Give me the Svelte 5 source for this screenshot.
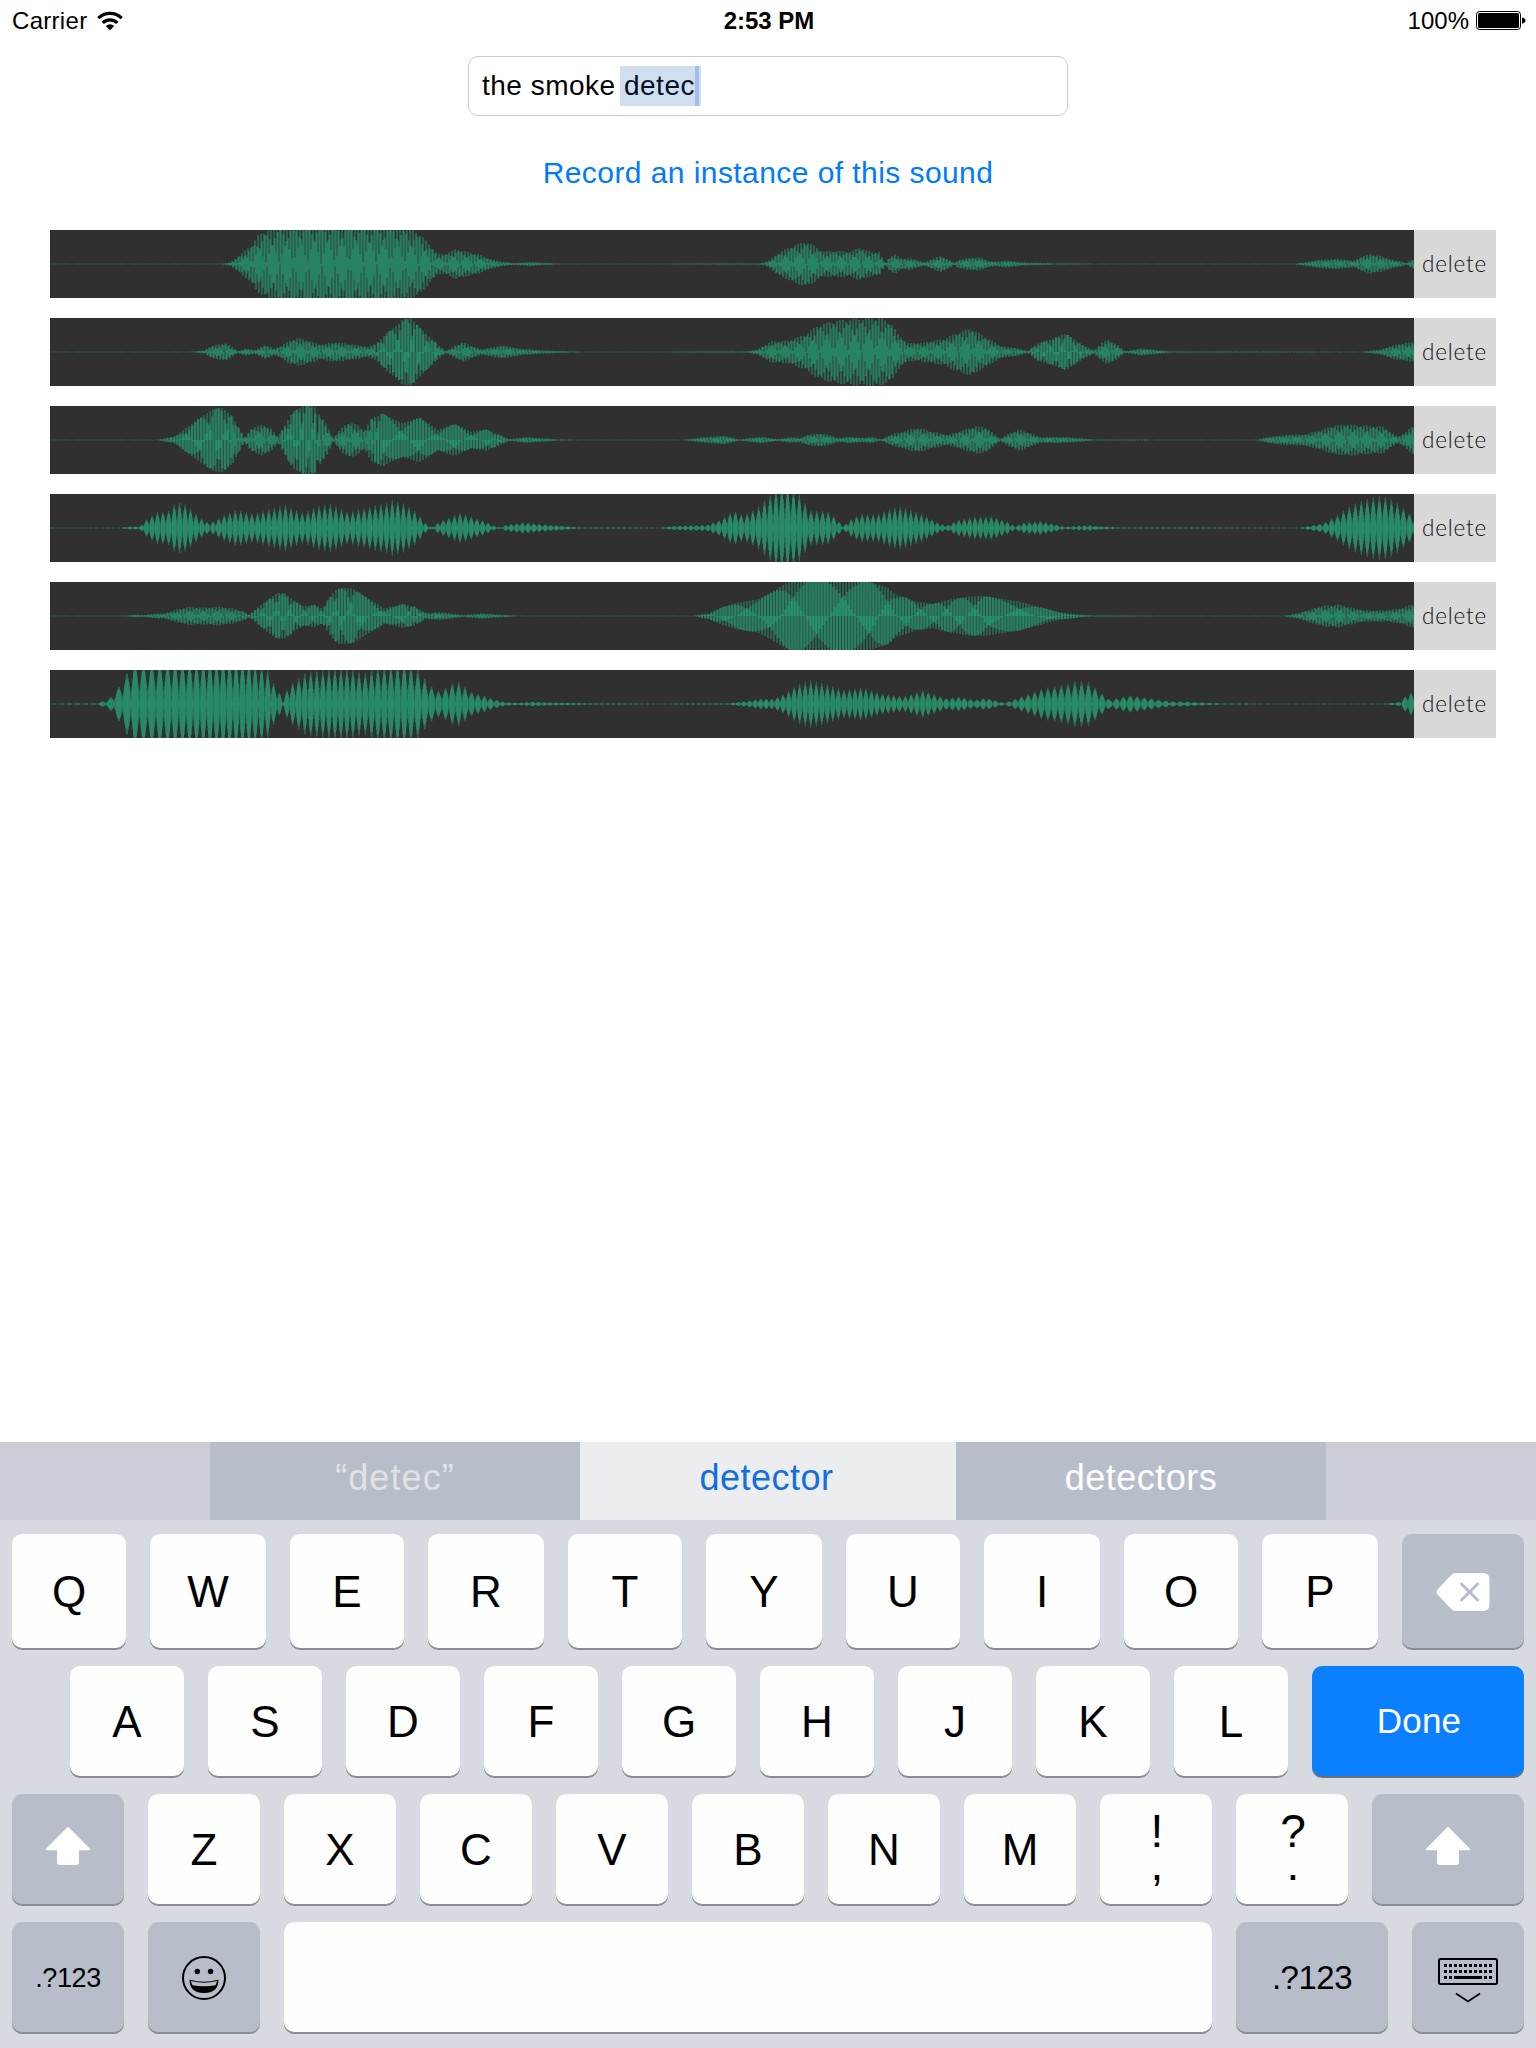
<script>
  const WIDTH = 1364;
  const HALF = 34;

  // Each envelope is a list of stretches: a start offset in px, then
  // [position, height] pairs counted in thirds of a pixel.
  const recordings = [
    {
      beats: [[0, 0], [1364, 410]],
      env: [
        [-10, [[30,1],[540,1],[570,6],[600,30],[630,55],[650,85],[680,105],[720,120],[800,135],[1060,125],[1110,105],[1130,98],[1165,60],[1190,30],[1210,30],[1245,45],[1310,30],[1340,18],[1380,7],[1420,3],[1470,6],[1520,3],[1560,1]]],
        [610, [[0,1],[300,2],[320,8],[350,32],[380,48],[400,58],[435,68],[460,55],[485,38],[520,40],[570,38],[595,50],[630,36],[655,36],[670,8],[675,4],[680,15],[700,30],[725,15],[745,18],[790,5],[810,14],[840,24],[870,10],[880,2],[890,12],[920,18],[960,20],[980,10],[1005,7],[1035,11],[1080,5],[1180,2],[1300,1]]],
        [1110, [[100,1],[400,1],[430,5],[470,12],[530,16],[560,12],[580,10],[600,22],[628,30],[660,24],[690,14],[720,8],[737,2],[745,8],[762,18]]]
      ]
    },
    {
      beats: [[0,0],[325,66],[338,67],[355,68],[367,69],[385,70],[780,180],[980,220],[1030,224],[1364,300]],
      env: [
        [-10, [[30,1],[450,1],[490,5],[510,18],[555,27],[590,3],[615,11],[640,5],[672,22],[700,10],[720,18],[745,35],[770,42],[800,36],[840,22],[880,30],[930,24],[980,15],[1010,28],[1040,60],[1070,80],[1085,98],[1110,100],[1135,75],[1160,50],[1190,22],[1215,3],[1240,18],[1265,30],[1320,8],[1385,20],[1440,10],[1500,5],[1560,3],[1620,1]]],
        [610, [[0,1],[260,2],[290,8],[330,32],[380,34],[430,52],[470,80],[520,95],[590,102],[650,105],[690,90],[710,55],[740,27],[780,28],[850,40],[890,60],[930,72],[970,48],[1020,18],[1070,12],[1100,3],[1130,25],[1170,38],[1215,55],[1250,30],[1300,5],[1320,25],[1340,38],[1370,22],[1390,3],[1410,5],[1440,11],[1490,6]]],
        [1110, [[0,5],[30,1.5],[600,1],[630,4],[660,8],[700,22],[730,27],[762,30]]]
      ]
    },
    {
      beats: [[0,-30],[120,-1],[148,0],[167,1],[182,2],[230,9],[245,10],[257,11],[267,12],[320,22],[332,23],[367,24],[403,25],[437,26],[460,28],[1364,260]],
      env: [
        [-10, [[30,1],[350,1],[400,10],[430,32],[475,65],[520,95],[545,95],[575,70],[595,38],[610,6],[630,35],[665,48],[690,34],[710,10],[730,40],[755,85],[780,98],[800,110],[820,100],[850,60],[870,20],[876,4],[900,35],[925,55],[950,45],[970,28],[990,62],[1025,80],[1050,65],[1085,50],[1135,67],[1160,52],[1190,30],[1240,48],[1290,25],[1335,32],[1370,18],[1405,2],[1450,9],[1500,6],[1550,2],[1600,1]]],
        [610, [[70,1],[90,3],[130,9],[190,13],[235,2],[300,10],[350,3],[385,8],[420,7],[440,16],[480,20],[510,14],[530,6],[570,10],[600,7],[635,9],[660,2],[690,16],[740,30],[770,37],[820,24],[860,15],[900,28],[945,42],[975,38],[1000,18],[1018,3],[1040,18],[1075,32],[1110,20],[1140,8],[1200,10],[1250,6],[1300,1.5]]],
        [1110, [[0,1],[290,1],[320,9],[370,15],[430,17],[480,30],[520,44],[560,48],[620,43],[670,40],[690,22],[712,10],[735,24],[762,50]]]
      ]
    },
    {
      lobes: [[0,5.5],[500,5.7],[640,5.5],[740,5.9],[860,5.3],[1200,5.8],[1364,6.1]],
      env: [
        [-10, [[30,1],[240,1],[260,4],[300,5],[310,20],[330,35],[350,48],[385,52],[407,78],[430,76],[450,60],[475,35],[505,16],[520,20],[555,42],[590,55],[640,42],[680,55],[735,70],[790,45],[830,65],[870,73],[925,48],[990,65],[1030,75],[1060,86],[1090,75],[1130,48],[1160,10],[1175,3],[1200,20],[1260,46],[1300,32],[1340,18],[1365,5],[1380,2],[1400,10],[1450,17],[1520,10],[1560,7],[1620,2]]],
        [610, [[0,1],[40,6],[140,9],[180,25],[220,52],[250,38],[290,60],[330,100],[350,125],[380,130],[415,105],[450,52],[500,52],[530,28],[548,5],[570,25],[600,42],[650,40],[680,55],[720,65],[760,52],[800,35],[840,12],[865,8],[890,24],[950,34],[1000,34],[1040,20],[1065,5],[1090,16],[1140,21],[1180,13],[1210,4],[1290,8],[1340,4],[1380,1.5]]],
        [1110, [[0,1.5],[420,1],[450,7],[490,14],[530,38],[560,60],[590,78],[630,92],[665,98],[700,84],[730,60],[762,32]]]
      ]
    },
    {
      beats: [[0,-50],[190,-1],[203,0],[218,1],[232,2],[245,3],[262,4],[278,5],[290,6],[308,7],[352,8],[385,11],[640,70],[673,71],[718,72],[765,73],[818,74],[855,75],[883,76],[908,77],[937,78],[1000,79],[1060,80.5],[1364,145]],
      env: [
        [-10, [[30,1],[250,1],[280,4],[310,3],[340,7],[370,8],[410,20],[440,27],[490,26],[540,29],[580,22],[610,12],[625,4],[650,25],[680,48],[710,70],[735,66],[760,45],[790,28],[820,34],[845,22],[865,55],[890,84],[935,82],[970,60],[1000,42],[1030,22],[1085,36],[1120,28],[1155,8],[1200,12],[1240,6],[1270,3],[1320,8],[1380,4],[1430,1]]],
        [610, [[0,1],[100,1],[140,8],[180,25],[230,40],[290,50],[330,70],[370,95],[400,108],[460,112],[550,112],[600,106],[640,98],[680,85],[705,62],[735,55],[765,42],[790,40],[815,36],[860,48],[920,58],[965,60],[1020,52],[1080,42],[1140,26],[1190,12],[1240,6],[1280,2]]],
        [1110, [[0,1],[370,1],[410,8],[440,18],[480,30],[530,35],[570,26],[610,17],[680,17],[720,24],[762,38]]]
      ]
    },
    {
      lobes: [[0,7.8],[90,8.5],[150,6.7],[240,6.1],[300,6],[370,7],[480,5.8],[820,5.5],[1000,6.7],[1160,7.4],[1364,6.5]],
      env: [
        [-10, [[30,1],[170,2],[185,8],[205,14],[220,30],[240,60],[265,102],[280,125],[600,140],[670,115],[690,95],[705,50],[715,46],[727,10],[740,45],[760,68],[800,98],[850,102],[900,110],[940,105],[970,92],[1000,110],[1100,125],[1130,108],[1160,68],[1180,48],[1200,38],[1240,66],[1260,66],[1290,38],[1340,22],[1360,14],[1400,5],[1430,4],[1480,7],[1560,4],[1660,2]]],
        [610, [[0,1],[200,2],[260,9],[300,16],[340,16],[370,28],[410,58],[450,72],[500,60],[550,42],[610,50],[660,32],[730,22],[790,42],[830,26],[860,17],[900,22],[940,12],[980,18],[1035,3],[1060,14],[1100,28],[1150,48],[1210,58],[1250,70],[1290,65],[1320,35],[1350,13],[1410,26],[1470,17],[1490,14]]],
        [1110, [[0,12],[30,8],[80,7],[100,6],[150,3],[200,2],[300,1],[670,1],[700,4],[720,6],[735,24],[750,36],[762,24]]]
      ]
    }
  ];

  function interpolate(points, x) {
    if (x <= points[0][0]) return points[0][1];
    for (let i = 1; i < points.length; i++) {
      const [bx, by] = points[i];
      if (x <= bx) {
        const [ax, ay] = points[i - 1];
        return ay + ((by - ay) * (x - ax)) / (bx - ax);
      }
    }
    return points[points.length - 1][1];
  }

  function bar(x, width, up, down) {
    const rise = Math.min(Math.max(up, 0.15), HALF);
    const fall = Math.min(Math.max(down, 0.15), HALF);
    return `M${x} ${(HALF - rise).toFixed(1)}h${width}V${(HALF + fall).toFixed(1)}h-${width}z`;
  }

  // Slow signals: distinct mirrored lobes over a low, even base.
  function traceLobes(envelope, lobes) {
    let peaks = '';
    let base = '';
    let turn = 0;
    for (let x = 0; x < WIDTH; x += 0.5) {
      const height = interpolate(envelope, x);
      turn += (0.5 * Math.PI) / interpolate(lobes, x);
      const lobe = Math.abs(Math.sin(turn));
      const peak = height * Math.pow(lobe, 1.15);
      const low = Math.min(height * (0.32 + 0.5 * lobe), HALF * 0.95 * (0.45 + lobe));
      peaks += bar(x, 0.5, peak, peak);
      base += bar(x, 0.5, low, low);
    }
    return [peaks, base];
  }

  // Fast signals: three interleaved strands, one path each, so that they look
  // brighter where they cross. A sparse fourth path holds the outer peaks.
  function traceStrands(envelope, beats) {
    const paths = ['', '', '', ''];
    for (let x = 0; x < WIDTH; x++) {
      const height = interpolate(envelope, x);
      const beat = interpolate(beats, x);
      const rate = interpolate(beats, x + 1) - beat;
      if (rate > 0.12) {
        const up = height * Math.pow(Math.abs(Math.cos(x * 2.17)), 0.9);
        const down = height * Math.pow(Math.abs(Math.cos(x * 2.17 + 1)), 0.9);
        paths[x % 3] += bar(x, 2.1, up, down);
      } else {
        const value = height * Math.cos((2 * Math.PI * (beat + x)) / 3);
        paths[x % 3] += bar(x, 2.7, value, -value);
        if (x % 3 === 0) paths[3] += bar(x, 2, height, height);
      }
    }
    return paths;
  }

  const waves = recordings.map(({ env, beats, lobes }) => {
    const envelope = env.flatMap(([start, pts]) => pts.map(([x, h]) => [start + x / 3, h / 3]));
    return lobes ? traceLobes(envelope, lobes) : traceStrands(envelope, beats);
  });

  const top = [...'QWERTYUIOP'];
  const home = [...'ASDFGHJKL'];
  const bottom = [...'ZXCVBNM'];
  const dots = [0, 1, 2, 3, 4, 5, 6, 7, 8, 9];
</script>

{#snippet shift()}
  <svg width="44" height="38" viewBox="0 0 44 38" fill="#fff">
    <path d="M21 .6q1-1.2 2 0L43.6 21.5q1 1.8-.8 1.8H33v12q0 2.7-2.7 2.7H13.7Q11 38 11 35.300v-12H1.200Q-.6 23.300.4 21.500z" />
  </svg>
{/snippet}

<div class="screen">
  <header class="status">
    <div class="carrier">
      <span>Carrier</span>
      <svg width="26" height="20" viewBox="0 0 26 20" fill="none" stroke="#000" stroke-width="3.2">
        <path d="M1.300 7.200a16.600 16.600 0 0 1 23.400 0M5.700 11.900a10.400 10.400 0 0 1 14.600 0" />
        <path d="M13 19.200 8.700 14.900q4.300-3.400 8.600 0z" fill="#000" stroke="none" />
      </svg>
    </div>
    <strong>2:53 PM</strong>
    <div class="power">
      <span>100%</span>
      <svg width="50" height="20" viewBox="0 0 50 20">
        <rect x=".5" y=".5" width="44" height="18" rx="3" fill="none" stroke="#000" />
        <rect x="2" y="2" width="41" height="15" rx="1.500" />
        <path d="M46 6.500q3.500.5 3.500 3t-3.500 3z" />
      </svg>
    </div>
  </header>

  <main>
    <div class="field">the smoke&nbsp;<mark>detec</mark></div>
    <button class="record">Record an instance of this sound</button>
    <ul>
      {#each waves as paths}
        <li>
          <svg class="wave" width="1364" height="68" viewBox="0 0 1364 68">
            {#each paths as d}
              <path class:solid={paths.length === 2} {d} />
            {/each}
          </svg>
          <button class="delete">delete</button>
        </li>
      {/each}
    </ul>
  </main>

  <section class="keyboard">
    <div class="suggestions">
      <span class="edge"></span>
      <span class="typed">“detec”</span>
      <span class="chosen">detector</span>
      <span class="other">detectors</span>
      <span class="edge"></span>
    </div>
    <div class="row first">
      {#each top as letter}<button class="key">{letter}</button>{/each}
      <button class="key dark">
        <svg width="54" height="38" viewBox="0 0 54 38">
          <path d="M20 0H47q6.500 0 6.500 6.500V31.500q0 6.500-6.500 6.500H20q-3 0-5-2.200L1.500 21.500q-2.200-2.500 0-5L15 2.200Q17 0 20 0z" fill="#fff" />
          <path d="m25.500 11 16 16m0-16-16 16" stroke="#b7beca" stroke-width="2.800" stroke-linecap="round" />
        </svg>
      </button>
    </div>
    <div class="row home">
      {#each home as letter}<button class="key">{letter}</button>{/each}
      <button class="key done">Done</button>
    </div>
    <div class="row third">
      <button class="key dark">{@render shift()}</button>
      {#each bottom as letter}<button class="key">{letter}</button>{/each}
      <button class="key pair"><span>!</span><span>,</span></button>
      <button class="key pair"><span>?</span><span>.</span></button>
      <button class="key dark">{@render shift()}</button>
    </div>
    <div class="row last">
      <button class="key dark small">.?123</button>
      <button class="key dark">
        <svg width="44" height="44" viewBox="0 0 44 44">
          <circle cx="22" cy="22" r="21" fill="none" stroke="#000" stroke-width="2" />
          <ellipse cx="15.300" cy="15.500" rx="2.700" ry="2.700" />
          <ellipse cx="28.600" cy="15.500" rx="2.700" ry="2.700" />
          <path d="M7.500 23.500q14.500 4.500 29 0q0 13.500-14.500 13.500t-14.500-13.500z" />
          <path d="M9 25q13 3.600 26 0-.5 2.400-1.500 4.200-11.500 2.200-23 0Q9.300 27 9 25z" fill="#b7beca" />
        </svg>
      </button>
      <button class="key space" aria-label="space"></button>
      <button class="key dark medium">.?123</button>
      <button class="key dark">
        <svg class="hide" width="60" height="45" viewBox="0 0 60 45">
          <rect x="1" y="1" width="58" height="25" rx="1.500" fill="none" stroke="#000" stroke-width="2" />
          {#each dots as i}
            <rect x={6 + i * 5} y="6" width="3" height="3" />
            <rect x={6 + i * 5} y="12" width="3" height="3" />
          {/each}
          <path d="M6 18h3v3H6zM11 18h3v3h-3zM16 18h28v3H16zM46 18h3v3h-3zM51 18h3v3h-3z" />
          <path d="m18 35.500 12 8 12-8" fill="none" stroke="#000" stroke-width="1.800" />
        </svg>
      </button>
    </div>
  </section>
</div>

<style>
  :global(body) {
    margin: 0;
    background: #fff;
  }
  .screen {
    display: flex;
    flex-direction: column;
    width: 1536px;
    height: 2048px;
    overflow: hidden;
    background: #fff;
    color: #000;
    font-family: 'Liberation Sans', Arial, sans-serif;
  }
  button {
    margin: 0;
    padding: 0;
    border: 0;
    background: none;
    color: inherit;
    font: inherit;
  }
  svg {
    display: block;
    flex: none;
  }
  .status {
    display: grid;
    grid-template-columns: 1fr auto 1fr;
    align-items: center;
    box-sizing: border-box;
    height: 41px;
    padding: 0 10px 0 12px;
    font-size: 24px;
    line-height: 40px;
  }
  .carrier,
  .power {
    display: flex;
    align-items: center;
  }
  .carrier {
    gap: 10px;
    letter-spacing: 0.3px;
  }
  .power {
    justify-content: flex-end;
    gap: 7px;
  }
  main {
    flex: 1;
    display: flex;
    flex-direction: column;
    align-items: center;
    padding-top: 15px;
  }
  .field {
    display: flex;
    align-items: center;
    box-sizing: border-box;
    width: 600px;
    height: 60px;
    padding: 0 13px 1px;
    border: 1px solid #ccc;
    border-radius: 10px;
    font-size: 28px;
    letter-spacing: 0.5px;
  }
  mark {
    height: 40px;
    padding-left: 4px;
    margin-left: -4px;
    border-right: 4px solid #a4bdef;
    box-shadow: 2px 0 #d0dff0;
    background: #d0dff0;
    color: #001026;
    line-height: 40px;
  }
  .record {
    margin-top: 39px;
    color: #007aff;
    font-size: 30px;
    line-height: 36px;
    letter-spacing: 0.43px;
  }
  ul {
    display: flex;
    flex-direction: column;
    gap: 20px;
    width: 1446px;
    margin: 39px 0 0;
    padding: 0 0 0 10px;
    list-style: none;
  }
  li {
    display: flex;
    height: 68px;
  }
  .wave {
    background: #303030;
  }
  .wave path {
    fill: #25b57d;
    fill-opacity: 0.38;
  }
  .wave .solid {
    fill-opacity: 0.44;
  }
  .delete {
    width: 82px;
    padding: 0 1px 2px 0;
    background: #d8d8d8;
    color: #111;
    font-family: Lato, sans-serif;
    font-size: 22.5px;
    font-weight: 300;
    letter-spacing: 0.8px;
  }
  .keyboard {
    height: 606px;
    background: #d7dae1;
  }
  .suggestions {
    display: grid;
    grid-template-columns: 210px 370px 376px 370px 210px;
    height: 78px;
    font-size: 36px;
    line-height: 72px;
    letter-spacing: 0.5px;
    text-align: center;
  }
  .edge {
    background: #cacdd6;
  }
  .typed,
  .other {
    background: #b7beca;
    color: #fff;
  }
  .typed {
    color: #e1e2e4;
    letter-spacing: 1.1px;
  }
  .chosen {
    padding-right: 3px;
    background: #ebedee;
    color: #126fe0;
  }
  .row {
    display: grid;
    column-gap: 24px;
    height: 110px;
    margin: 18px 12px 0;
  }
  .first {
    grid-template-columns: repeat(5, 114px 116px) 122px;
    height: 114px;
    margin-top: 14px;
  }
  .home {
    grid-template-columns: repeat(9, 114px) 212px;
    margin-left: 70px;
  }
  .third {
    grid-template-columns: repeat(10, 112px) 152px;
  }
  .last {
    grid-template-columns: 112px 112px 928px 152px 112px;
  }
  .key {
    display: flex;
    align-items: center;
    justify-content: center;
    box-sizing: border-box;
    padding-top: 2px;
    border-radius: 10px;
    background: #fefefe;
    box-shadow: 0 2px #8b8d92;
    font-size: 44px;
    line-height: 50px;
  }
  .dark {
    background: #b7beca;
  }
  .done {
    padding: 0 0 0 2px;
    background: #0a80ff;
    box-shadow: 0 2px #6d7075;
    color: #fff;
    font-size: 35px;
    letter-spacing: 0.2px;
  }
  .small {
    font-size: 27px;
    letter-spacing: -0.4px;
  }
  .medium {
    font-size: 33px;
    letter-spacing: -0.5px;
  }
  .pair {
    flex-direction: column;
    padding: 0 0 3px 2px;
    font-size: 46px;
    line-height: 33px;
  }
  .third svg {
    margin-bottom: 8px;
  }
  .last .hide {
    margin-top: 5px;
  }
</style>
